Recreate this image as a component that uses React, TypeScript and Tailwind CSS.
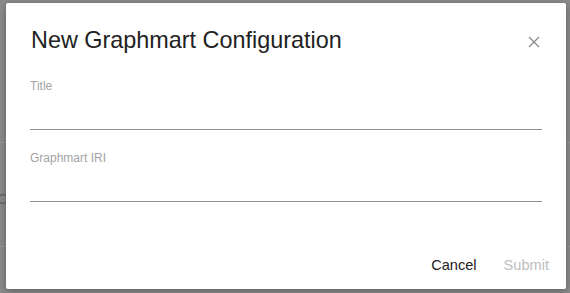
import { useState } from 'react';

function CloseIcon() {
  return (
    <svg width="12" height="12" viewBox="0 0 12 12" className="text-[#8a8a8a]">
      <path d="M1 1 L11 11 M11 1 L1 11" stroke="currentColor" strokeWidth="1.3" fill="none" />
    </svg>
  );
}

function Field({ label, value, onChange }: { label: string; value: string; onChange: (v: string) => void }) {
  return (
    <label className="block">
      <span className="block text-[12px] leading-[14px] text-[#a3a3a3]">{label}</span>
      <input
        value={value}
        onChange={e => onChange(e.target.value)}
        className="w-full h-[28px] mt-[9px] bg-transparent outline-none border-b border-[#8f8f8f] text-sm text-[#222]"
      />
    </label>
  );
}

export default function App() {
  const [title, setTitle] = useState('');
  const [iri, setIri] = useState('');
  const canSubmit = title.trim() !== '' && iri.trim() !== '';

  return (
    <div className="relative w-[570px] h-[293px] overflow-hidden bg-[#8c8c8c] font-['Liberation_Sans',Arial,sans-serif]">
      {/* page behind the overlay */}
      <div className="absolute inset-0 flex flex-col">
        <div className="h-[143px] border-b border-[#9a9a9a]" />
        <div className="h-[104px] border-b border-[#9a9a9a] flex items-center">
          <span className="text-[15px] leading-[18px] mt-[8px] text-[#666] -ml-[3px]">C</span>
        </div>
      </div>

      <div className="absolute left-[6px] top-[3px] w-[560px] h-[286px] bg-white rounded-[2px] shadow-[0_2px_8px_rgba(0,0,0,0.35)] flex flex-col">
        <div className="flex items-start justify-between pl-[25px] pr-[26px] pt-[23px]">
          <h2 className="text-[23.4px] leading-[28px] text-[#222]">New Graphmart Configuration</h2>
          <button className="mt-[10px]" aria-label="Close">
            <CloseIcon />
          </button>
        </div>
        <div className="flex flex-col gap-[21px] px-[24px] pt-[25px]">
          <Field label="Title" value={title} onChange={setTitle} />
          <Field label="Graphmart IRI" value={iri} onChange={setIri} />
        </div>
        <div className="mt-auto flex justify-end gap-[27px] pr-[17px] pb-[15px] text-[14.6px] leading-[18px]">
          <button className="text-[#222]">Cancel</button>
          <button className={canSubmit ? 'text-[#222]' : 'text-[#bdbdbd]'} disabled={!canSubmit}>Submit</button>
        </div>
      </div>
    </div>
  );
}
